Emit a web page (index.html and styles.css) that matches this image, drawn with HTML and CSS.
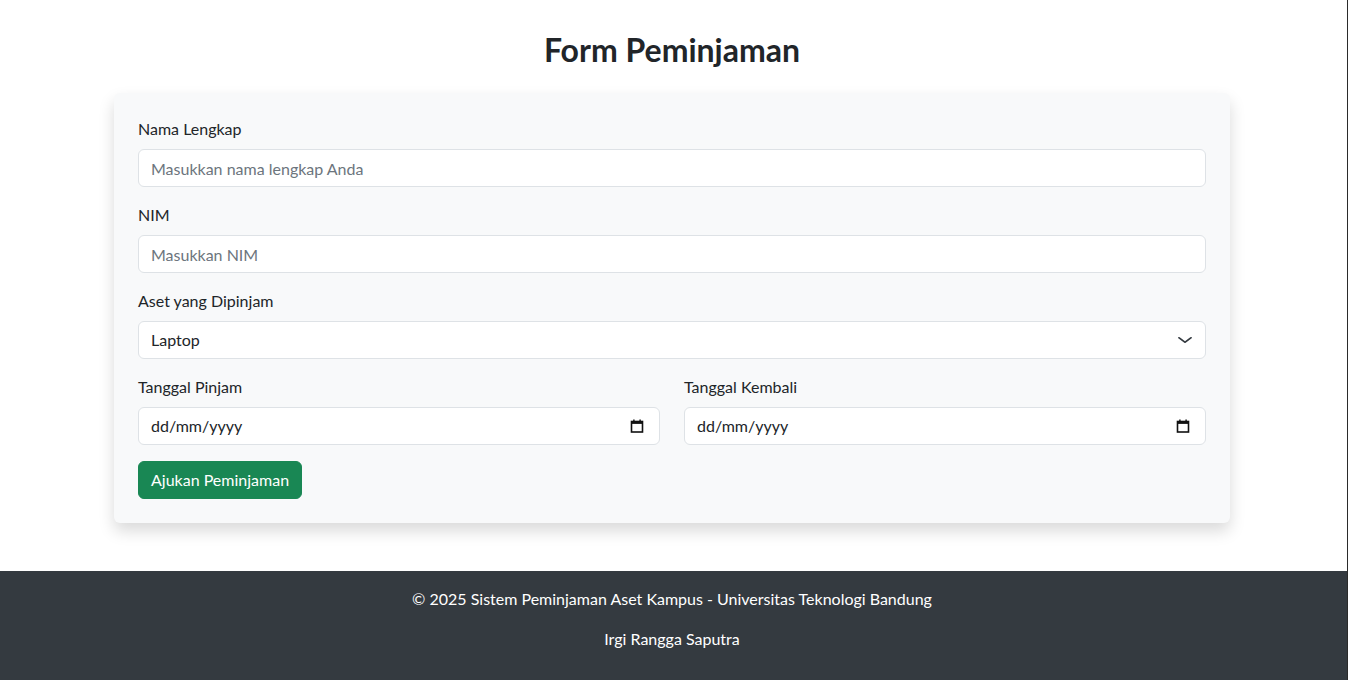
FILE: index.html
```html
<!DOCTYPE html>
<html lang="id">
<head>
<meta charset="utf-8">
<title>Form Peminjaman</title>
<link rel="stylesheet" href="styles.css">
</head>
<body>
<div class="wrap">
  <main class="container">
    <h2 class="title">Form Peminjaman</h2>
    <form class="card">
      <div class="field">
        <label class="label" for="nama">Nama Lengkap</label>
        <input class="control" id="nama" type="text" placeholder="Masukkan nama lengkap Anda">
      </div>
      <div class="field">
        <label class="label" for="nim">NIM</label>
        <input class="control" id="nim" type="text" placeholder="Masukkan NIM">
      </div>
      <div class="field">
        <label class="label">Aset yang Dipinjam</label>
        <div class="control select">
          <span>Laptop</span>
          <svg class="chev" width="16" height="12" viewBox="0 0 16 16" preserveAspectRatio="none"><path d="M2 5l6 6 6-6" fill="none" stroke="#343a40" stroke-width="2" stroke-linecap="round" stroke-linejoin="round"/></svg>
        </div>
      </div>
      <div class="row">
        <div class="field col">
          <label class="label">Tanggal Pinjam</label>
          <div class="control date">
            <span>dd/mm/yyyy</span>
            <svg class="cal" width="14" height="14" viewBox="0 0 14 14"><rect x="1.5" y="2.5" width="11" height="10.5" fill="none" stroke="#111" stroke-width="1.6"/><rect x="1.5" y="2.5" width="11" height="2.4" fill="#111"/><rect x="3.2" y="0.5" width="1.4" height="2.5" fill="#111"/><rect x="9.4" y="0.5" width="1.4" height="2.5" fill="#111"/></svg>
          </div>
        </div>
        <div class="field col">
          <label class="label">Tanggal Kembali</label>
          <div class="control date">
            <span>dd/mm/yyyy</span>
            <svg class="cal" width="14" height="14" viewBox="0 0 14 14"><rect x="1.5" y="2.5" width="11" height="10.5" fill="none" stroke="#111" stroke-width="1.6"/><rect x="1.5" y="2.5" width="11" height="2.4" fill="#111"/><rect x="3.2" y="0.5" width="1.4" height="2.5" fill="#111"/><rect x="9.4" y="0.5" width="1.4" height="2.5" fill="#111"/></svg>
          </div>
        </div>
      </div>
      <button class="btn" type="button">Ajukan Peminjaman</button>
    </form>
  </main>
</div>
<footer class="footer">
  <p>© 2025 Sistem Peminjaman Aset Kampus - Universitas Teknologi Bandung</p>
  <p>Irgi Rangga Saputra</p>
</footer>
</body>
</html>
```
FILE: styles.css
```css
*{box-sizing:border-box;}
html,body{margin:0;padding:0;}
body{
  font-family:Lato,"Liberation Sans",sans-serif;
  font-size:16px;
  line-height:1.5;
  color:#212529;
  background:#fff;
}
body::after{
  content:"";
  position:fixed;
  top:0;right:0;bottom:0;
  width:1px;
  background:#2b2b2b;
}
.wrap{padding-right:4px;}
.container{
  max-width:1116px;
  margin:0 auto;
  padding-top:31px;
  padding-bottom:48px;
}
.title{
  margin:0 0 24px;
  text-align:center;
  font-size:32px;
  font-weight:700;
  line-height:38px;
}
.card{
  display:flex;
  flex-direction:column;
  padding:24px;
  background:#f8f9fa;
  border-radius:6px;
  box-shadow:0 8px 16px rgba(0,0,0,.15);
}
.field{
  display:flex;
  flex-direction:column;
  margin-bottom:16px;
}
.label{
  display:block;
  margin-bottom:8px;
  line-height:24px;
}
.control{
  display:flex;
  align-items:center;
  width:100%;
  height:38px;
  padding:6px 12px;
  font:inherit;
  font-size:16px;
  color:#212529;
  background:#fff;
  border:1px solid #dee2e6;
  border-radius:6px;
  outline:none;
}
.control::placeholder{color:#6c757d;}
.select,.date{justify-content:space-between;}
.select .chev{margin-right:0;}
.date .cal{margin-right:3px;}
.row{
  display:flex;
  gap:24px;
}
.col{flex:1 1 0;}
.btn{
  align-self:flex-start;
  height:38px;
  padding:6px 12px;
  font:inherit;
  color:#fff;
  background:#198754;
  border:1px solid #198754;
  border-radius:6px;
}
.footer{
  background:#343a40;
  color:#fff;
  text-align:center;
  padding:16px 0 16px;
  padding-right:4px;
}
.footer p{margin:0 0 16px;line-height:24px;}
```
